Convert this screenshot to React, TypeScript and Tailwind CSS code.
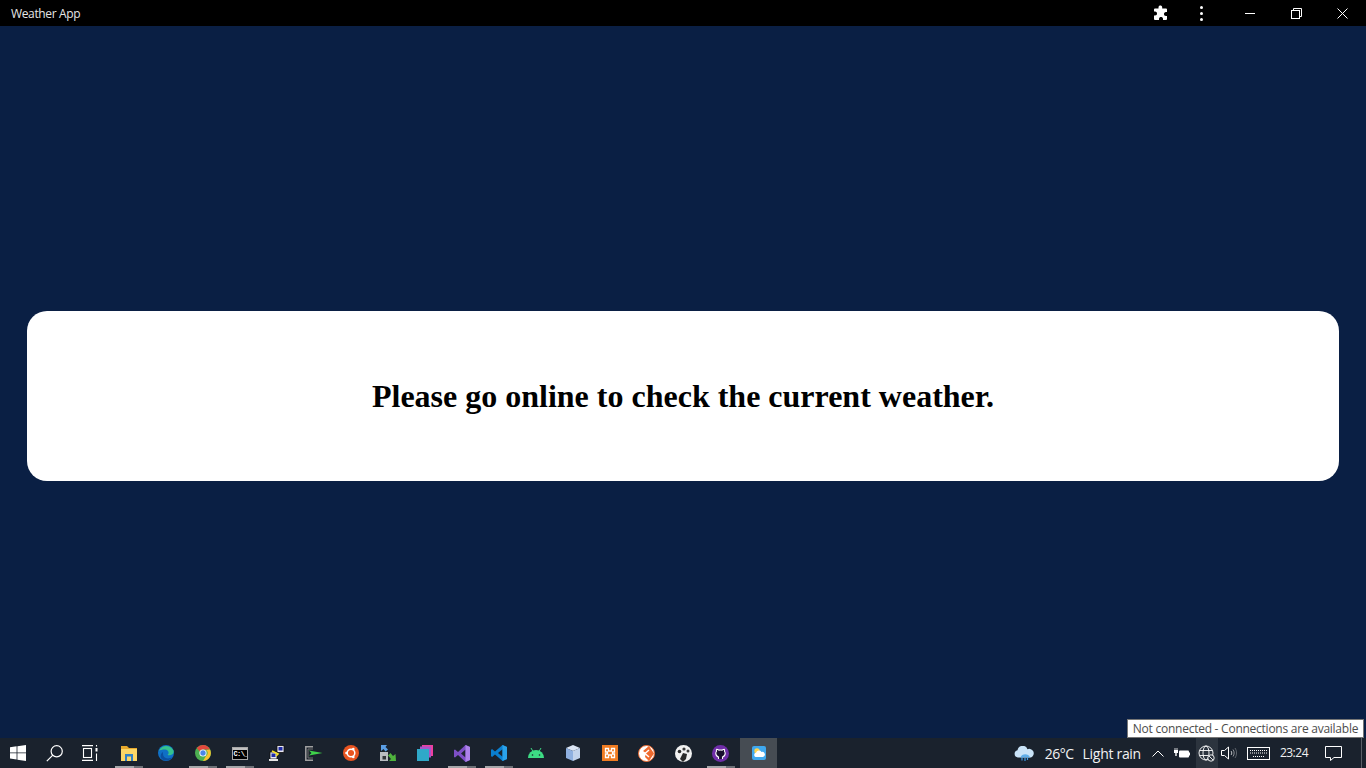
import React from "react";

const segoe = "font-['Open_Sans','Noto_Sans',sans-serif]";

function TaskButton({
  children,
  mark,
  active,
  first,
}: {
  children: React.ReactNode;
  mark?: boolean;
  active?: boolean;
  first?: boolean;
}) {
  return (
    <div
      className={`relative flex h-full shrink-0 items-center justify-center ${
        first ? "w-[36px]" : "w-[37px]"
      } ${active ? "ml-[1px] w-[36px] bg-[#464c53]" : ""}`}
    >
      {children}
      {mark && (
        <div className="absolute bottom-0 left-1/2 flex h-[2px] w-[28px] -translate-x-1/2">
          <div className="h-full w-[19px] bg-[#a5a7aa]" />
          <div className="h-full w-[9px] bg-[#6c7076]" />
        </div>
      )}
    </div>
  );
}

function WindowsLogo() {
  return (
    <svg width="16" height="16" viewBox="0 0 16 16" fill="#fff">
      <path d="M0 2.300 6.600 1.300V7.400H0ZM7.400 1.200 16 0V7.400H7.400ZM0 8.200H6.600V14.400L0 13.500ZM7.400 8.200H16V16L7.400 14.800Z" />
    </svg>
  );
}

function SearchIcon() {
  return (
    <svg width="17" height="17" viewBox="0 0 17 17" fill="none" stroke="#fff" strokeWidth="1.200">
      <circle cx="10.700" cy="6.300" r="5.600" />
      <path d="M6.800 10.200 .8 16.200" />
    </svg>
  );
}

function TaskViewIcon() {
  return (
    <svg width="16" height="16" viewBox="0 0 16 16" fill="none" stroke="#fff" strokeWidth="1.100" className="-ml-[3px]">
      <path d="M0 .6H11M0 15.400H11" />
      <rect x="1.500" y="3.500" width="8" height="9" />
      <rect x="13.500" y="3" width="2" height="3.500" fill="#fff" stroke="none" />
      <path d="M14.500 8.500V16M14.500 0V1.500" />
    </svg>
  );
}

function FolderIcon() {
  return (
    <svg width="16" height="15" viewBox="0 0 16 15">
      <path d="M0 0H6L8 2H16V5H0Z" fill="#e8a92c" />
      <path d="M0 3H16V15H0Z" fill="#fbd666" />
      <path d="M4 8H12V15H10V10.500H6V15H4Z" fill="#2f7fc4" />
    </svg>
  );
}

function EdgeIcon() {
  return (
    <svg width="16" height="16" viewBox="0 0 16 16">
      <circle cx="8" cy="8" r="8" fill="#0f6fc6" />
      <path d="M1 6C3 0 12-1 15.500 5.500 16.500 9 13 11 9.500 10 12 8 10 4.500 7 4.500 4 4.500 2 5 1 6Z" fill="#35c28e" />
      <path d="M5 9C5 13 9.500 15 15 12 12 16 6 17 3 13 2 11 3 8 5 7Z" fill="#0b4fa0" />
    </svg>
  );
}

function ChromeIcon() {
  return (
    <svg width="16" height="16" viewBox="0 0 16 16">
      <circle cx="8" cy="8" r="8" fill="#4caf50" />
      <path d="M8 0A8 8 0 0 1 15 4.500H8A3.500 3.500 0 0 0 4.800 6.500L1.800 3A8 8 0 0 1 8 0Z" fill="#e2483d" />
      <path d="M15 4.500A8 8 0 0 1 8 16L11 11A3.500 3.500 0 0 0 11 5Z" fill="#fbc02d" />
      <circle cx="8" cy="8" r="3.600" fill="#fff" />
      <circle cx="8" cy="8" r="2.700" fill="#4a86e8" />
    </svg>
  );
}

function CmdIcon() {
  return (
    <div className="flex h-[13px] w-[16px] flex-col overflow-hidden border border-[#a8a8a8] bg-black">
      <div className="h-[2px] shrink-0 bg-[#c0c0c0]" />
      <div className="pl-[1px] font-['Liberation_Mono',monospace] text-[7px] font-bold leading-[9px] tracking-[-0.6px] text-white">
        C:\_
      </div>
    </div>
  );
}

function PuttyIcon() {
  return (
    <svg width="16" height="16" viewBox="0 0 16 16">
      <rect x="8" y=".5" width="7" height="7" fill="#e8e8f2" stroke="#111" strokeWidth=".8" />
      <rect x="9.500" y="2" width="4" height="3.500" fill="#1e2ca8" />
      <rect x="1" y="7" width="7" height="7" fill="#e8e8f2" stroke="#111" strokeWidth=".8" />
      <rect x="2.500" y="8.500" width="4" height="3.500" fill="#1e2ca8" />
      <path d="M3 6 9 9 7 11" fill="none" stroke="#f7e028" strokeWidth="1.600" />
      <rect x="0" y="14" width="9" height="2" fill="#e5e5e5" />
    </svg>
  );
}

function TerminalIcon() {
  return (
    <svg width="18" height="15" viewBox="0 0 18 15" fill="none">
      <path d="M8 .8H.8V14.200H8" stroke="#a0a0a0" strokeWidth="1.500" />
      <path d="M8 3H3V12H8" stroke="#707070" strokeWidth="1" />
      <path d="M4 4.500 17.500 7 4 9.500 6.500 7Z" fill="#3fd24a" />
    </svg>
  );
}

function UbuntuIcon() {
  return (
    <svg width="16" height="16" viewBox="0 0 16 16">
      <circle cx="8" cy="8" r="8" fill="#e95420" />
      <circle cx="8" cy="8" r="3.800" fill="none" stroke="#fff" strokeWidth="1.500" />
      <circle cx="3.500" cy="8" r="1.300" fill="#fff" />
      <circle cx="10.300" cy="4" r="1.300" fill="#fff" />
      <circle cx="10.300" cy="12" r="1.300" fill="#fff" />
    </svg>
  );
}

function VpnIcon() {
  return (
    <svg width="16" height="16" viewBox="0 0 16 16">
      <path d="M1 0H7L5.500 2 8 4.500 5.500 6.500 3.500 4 1 6Z" fill="#5a9fe6" />
      <rect x="0" y="7" width="8" height="9" fill="#b9bcc2" />
      <rect x="2.500" y="11" width="3.500" height="3.500" fill="#30343a" />
      <path d="M16 16H9L11 14 8 10.500 10.500 8 13 11 15.500 9Z" fill="#4fb33d" />
    </svg>
  );
}

function StackIcon() {
  return (
    <svg width="16" height="16" viewBox="0 0 16 16">
      <rect x="5" y="0" width="11" height="11" fill="#ed3fa0" />
      <rect x="3" y="1.500" width="11" height="11" fill="#a855c9" />
      <rect x="0" y="4" width="12" height="12" fill="#2fa9c9" />
    </svg>
  );
}

function VisualStudioIcon() {
  return (
    <svg width="16" height="17" viewBox="0 0 16 17">
      <path d="M11.500 0 16 2V15L11.500 17 4 10 1 12.500 0 12V5L1 4.500 4 7Z" fill="#7d4fc6" />
      <path d="M11.500 4.500 7 8.500 11.500 12.500Z" fill="#1e2530" />
      <path d="M11.500 0 16 2V15L11.500 17V12.500L11.500 4.500Z" fill="#ad82ea" />
    </svg>
  );
}

function VsCodeIcon() {
  return (
    <svg width="16" height="16" viewBox="0 0 16 16">
      <path d="M11.500 0 16 2V14L11.500 16 4 9.500 1 12 0 11V5L1 4 4 6.500Z" fill="#0a7fd0" />
      <path d="M11.500 4.200 7 8 11.500 11.800Z" fill="#1a222d" />
      <path d="M11.500 0 16 2V14L11.500 16Z" fill="#2aa2ea" />
    </svg>
  );
}

function AndroidIcon() {
  return (
    <svg width="16" height="10" viewBox="0 0 16 10" fill="#3ddc84">
      <path d="M0 10A8 8 0 0 1 16 10Z" />
      <path d="M3 0 5 3.500M13 0 11 3.500" stroke="#3ddc84" strokeWidth="1" />
      <circle cx="4.500" cy="7" r=".8" fill="#1a222d" />
      <circle cx="11.500" cy="7" r=".8" fill="#1a222d" />
    </svg>
  );
}

function CubeIcon() {
  return (
    <svg width="14" height="16" viewBox="0 0 14 16">
      <path d="M7 0 14 3 7 6 0 3Z" fill="#dbe6f5" />
      <path d="M0 3 7 6V16L0 13Z" fill="#8fb0e0" />
      <path d="M14 3 7 6V16L14 13Z" fill="#c2d3ec" />
    </svg>
  );
}

function XamppIcon() {
  return (
    <svg width="16" height="16" viewBox="0 0 16 16">
      <rect width="16" height="16" fill="#f07c22" />
      <path d="M3.500 3.500H6.500V6H9.500V3.500H12.500V7H10.500V9H12.500V12.500H9.500V10H6.500V12.500H3.500V9H5.500V7H3.500Z" fill="none" stroke="#fff" strokeWidth="1.300" />
    </svg>
  );
}

function GitIcon() {
  return (
    <svg width="17" height="17" viewBox="0 0 17 17">
      <circle cx="8.500" cy="8.500" r="8" fill="#fff" stroke="#ef6a2e" strokeWidth="1" />
      <path d="M11 1 16 8.500 11 16 7 12 8 8 5 6Z" fill="#ef6a2e" />
      <path d="M11 5 7 8.500 11 12" fill="none" stroke="#fff" strokeWidth="1.500" />
    </svg>
  );
}

function PaletteIcon() {
  return (
    <svg width="17" height="17" viewBox="0 0 17 17">
      <circle cx="8.500" cy="8.500" r="8.500" fill="#f2f2f2" />
      <path d="M8 8 12 9 11 14 8 17 5 14Z" fill="#2a2a2a" />
      <circle cx="4.500" cy="6.500" r="1.800" fill="#2a2a2a" />
      <circle cx="9" cy="4" r="1.600" fill="#3a3a3a" />
      <circle cx="13" cy="6" r="1.500" fill="#3a3a3a" />
    </svg>
  );
}

function GithubIcon() {
  return (
    <svg width="17" height="17" viewBox="0 0 17 17">
      <circle cx="8.500" cy="8.500" r="8.500" fill="#6f2da8" />
      <path d="M6.500 14V12C4.500 11.500 3.800 10 3.800 8.300 3.800 7.500 4 7 4.500 6.300 4.300 5.500 4.500 4.500 4.800 4.300 5.500 4.300 6.300 4.800 6.800 5.100 7.800 4.900 9.200 4.900 10.200 5.100 10.700 4.800 11.500 4.300 12.200 4.300 12.500 4.500 12.700 5.500 12.500 6.300 13 7 13.200 7.500 13.200 8.300 13.200 10 12.500 11.500 10.500 12V14" fill="#1a1030" stroke="#fff" strokeWidth="1.100" />
    </svg>
  );
}

function WeatherTileIcon() {
  return (
    <svg width="14" height="14" viewBox="0 0 14 14">
      <rect width="14" height="14" rx="2" fill="#3fa8ef" />
      <circle cx="5" cy="5" r="2.700" fill="#ffd34d" />
      <path d="M3.500 11A2.200 2.200 0 0 1 4 6.800 3 3 0 0 1 9.500 6 2.500 2.500 0 0 1 11 11Z" fill="#fff" />
    </svg>
  );
}

function CloudRainIcon() {
  return (
    <svg width="21" height="15" viewBox="0 0 21 15">
      <path d="M4 11.500A3.700 3.700 0 0 1 3.500 4.200 5.200 5.200 0 0 1 13.500 3.200 4.300 4.300 0 0 1 17 11.500Z" fill="#c9e3f8" />
      <path d="M6.500 11.500C7.500 7.500 14.500 7 16 11.500Z" fill="#5fade9" />
      <path d="M8 12V14.500M11 12V15M13.500 12V14" stroke="#3f9be6" strokeWidth="1.200" />
    </svg>
  );
}

export default function App() {
  return (
    <div className="flex h-screen w-full flex-col overflow-hidden bg-[#0a1f44]">
      <header className="flex h-[26px] shrink-0 items-center bg-black pl-[11px] text-[#e6e6e6]">
        <span className={`${segoe} pt-[1px] text-[12px] tracking-[-0.35px]`}>Weather App</span>
        <div className="ml-auto flex h-full items-center">
          <svg width="16" height="16" viewBox="0 0 16 16" fill="#fff" className="mr-[31px]">
            <path d="M5.500 2.500C5.500 1 6.500 .5 7.300 .5 8.200 .5 9.200 1 9.200 2.500V3.500H13A1 1 0 0 1 14 4.500V7H13C11.500 7 11 8 11 9S11.500 11 13 11H14V14A1 1 0 0 1 13 15H10V14C10 12.500 9 12 8 12S6 12.500 6 14V15H2A1 1 0 0 1 1 14V10.500H2C3.500 10.500 4 9.500 4 8.500S3.500 6.500 2 6.500H1V4.500A1 1 0 0 1 2 3.500H5.500Z" />
          </svg>
          <div className="mr-[42px] flex flex-col gap-[3px]">
            <div className="h-[3px] w-[3px] rounded-full bg-white" />
            <div className="h-[3px] w-[3px] rounded-full bg-white" />
            <div className="h-[3px] w-[3px] rounded-full bg-white" />
          </div>
          <div className="mr-[36px] h-[1px] w-[10px] bg-white" />
          <svg width="11" height="11" viewBox="0 0 11 11" fill="none" stroke="#fff" className="mr-[35px]">
            <rect x=".5" y="2.500" width="8" height="8" />
            <path d="M2.500 2.500V.5H10.500V8.500H8.500" />
          </svg>
          <svg width="11" height="11" viewBox="0 0 11 11" fill="none" stroke="#fff" className="mr-[18px]">
            <path d="M.5.5 10.500 10.500M10.500.5 .5 10.500" />
          </svg>
        </div>
      </header>

      <main className="flex min-h-0 flex-1 items-center px-[27px] pt-[28px]">
        <div className="flex h-[170px] w-full items-center justify-center rounded-[20px] bg-white">
          <h1 className="font-['Liberation_Serif',serif] text-[32px] font-bold text-black">
            Please go online to check the current weather.
          </h1>
        </div>
      </main>

      <footer className={`relative flex h-[30px] shrink-0 items-center bg-[#1a222d] text-white ${segoe}`}>
        <div className="absolute right-[2px] top-[-19px] flex h-[19px] w-[237px] items-center justify-center border border-[#767676] bg-white text-[12px] tracking-[-0.25px] text-[#4c4c4c]">
          Not connected - Connections are available
        </div>

        <div className="flex h-full">
          <TaskButton first><WindowsLogo /></TaskButton>
          <TaskButton><SearchIcon /></TaskButton>
          <TaskButton><TaskViewIcon /></TaskButton>
          <TaskButton mark><FolderIcon /></TaskButton>
          <TaskButton><EdgeIcon /></TaskButton>
          <TaskButton mark><ChromeIcon /></TaskButton>
          <TaskButton mark><CmdIcon /></TaskButton>
          <TaskButton><PuttyIcon /></TaskButton>
          <TaskButton><TerminalIcon /></TaskButton>
          <TaskButton><UbuntuIcon /></TaskButton>
          <TaskButton><VpnIcon /></TaskButton>
          <TaskButton><StackIcon /></TaskButton>
          <TaskButton mark><VisualStudioIcon /></TaskButton>
          <TaskButton mark><VsCodeIcon /></TaskButton>
          <TaskButton><AndroidIcon /></TaskButton>
          <TaskButton><CubeIcon /></TaskButton>
          <TaskButton><XamppIcon /></TaskButton>
          <TaskButton><GitIcon /></TaskButton>
          <TaskButton><PaletteIcon /></TaskButton>
          <TaskButton mark><GithubIcon /></TaskButton>
          <TaskButton active><WeatherTileIcon /></TaskButton>
        </div>

        <div className="ml-auto flex h-full items-center text-[14px] text-[#f2f2f2]">
          <div className="mr-[10px] flex h-full items-center justify-center"><CloudRainIcon /></div>
          <span className="mr-[9px] tracking-[-0.5px]">26°C</span>
          <span className="mr-[11px] tracking-[-0.3px]">Light rain</span>
          <svg width="12" height="7" viewBox="0 0 12 7" fill="none" stroke="#fff" className="mr-[10px]">
            <path d="M.5 6.500 6 1 11.500 6.500" />
          </svg>
          <svg width="16" height="11" viewBox="0 0 16 11" className="mr-[6px]">
            <path d="M1 0V2M3 0V2" stroke="#fff" strokeWidth=".8" />
            <path d="M0 2H4V5H2.700V8H1.300V5H0Z" fill="#fff" />
            <rect x="5" y="2.500" width="10" height="7" rx="1" fill="#fff" />
            <rect x="15" y="4.500" width="1" height="3" fill="#fff" />
          </svg>
          <div className="relative mr-[3px] flex h-full w-[22px] items-center justify-center bg-[#2c343e]">
            <svg width="17" height="17" viewBox="0 0 17 17" fill="none" stroke="#fff" strokeWidth=".9">
              <circle cx="8" cy="8" r="7" />
              <ellipse cx="8" cy="8" rx="3" ry="7" />
              <path d="M1.500 5.500H14.500M1.500 10.500H14.500" />
              <circle cx="13" cy="13" r="3.200" fill="#2c343e" />
              <path d="M11 11 15 15" />
            </svg>
          </div>
          <svg width="16" height="14" viewBox="0 0 16 14" fill="none" stroke="#fff" className="mr-[10px]">
            <path d="M.5 4.500H3.500L7.500 1V13L3.500 9.500H.5Z" />
            <path d="M10 5C11 6 11 8 10 9" opacity=".7" />
            <path d="M12 3.500C13.500 5.500 13.500 8.500 12 10.500" opacity=".5" />
            <path d="M14 2C16 5 16 9 14 12" opacity=".3" />
          </svg>
          <svg width="23" height="13" viewBox="0 0 23 13" fill="none" stroke="#fff" className="mr-[10px]">
            <rect x=".5" y=".5" width="22" height="12" />
            <path d="M3 3.500H20M3 6H20M6 9.500H17" strokeDasharray="1 1" />
          </svg>
          <span className="mr-[17px] text-[12px] tracking-[-0.5px]">23:24</span>
          <svg width="17" height="15" viewBox="0 0 17 15" fill="none" stroke="#fff" className="mr-[19px]">
            <path d="M.5.5H16.500V11.500H9L5.500 14.500V11.500H.5Z" />
          </svg>
          <div className="mr-[4px] h-full w-[1px] bg-[#5a6068]" />
        </div>
      </footer>
    </div>
  );
}
